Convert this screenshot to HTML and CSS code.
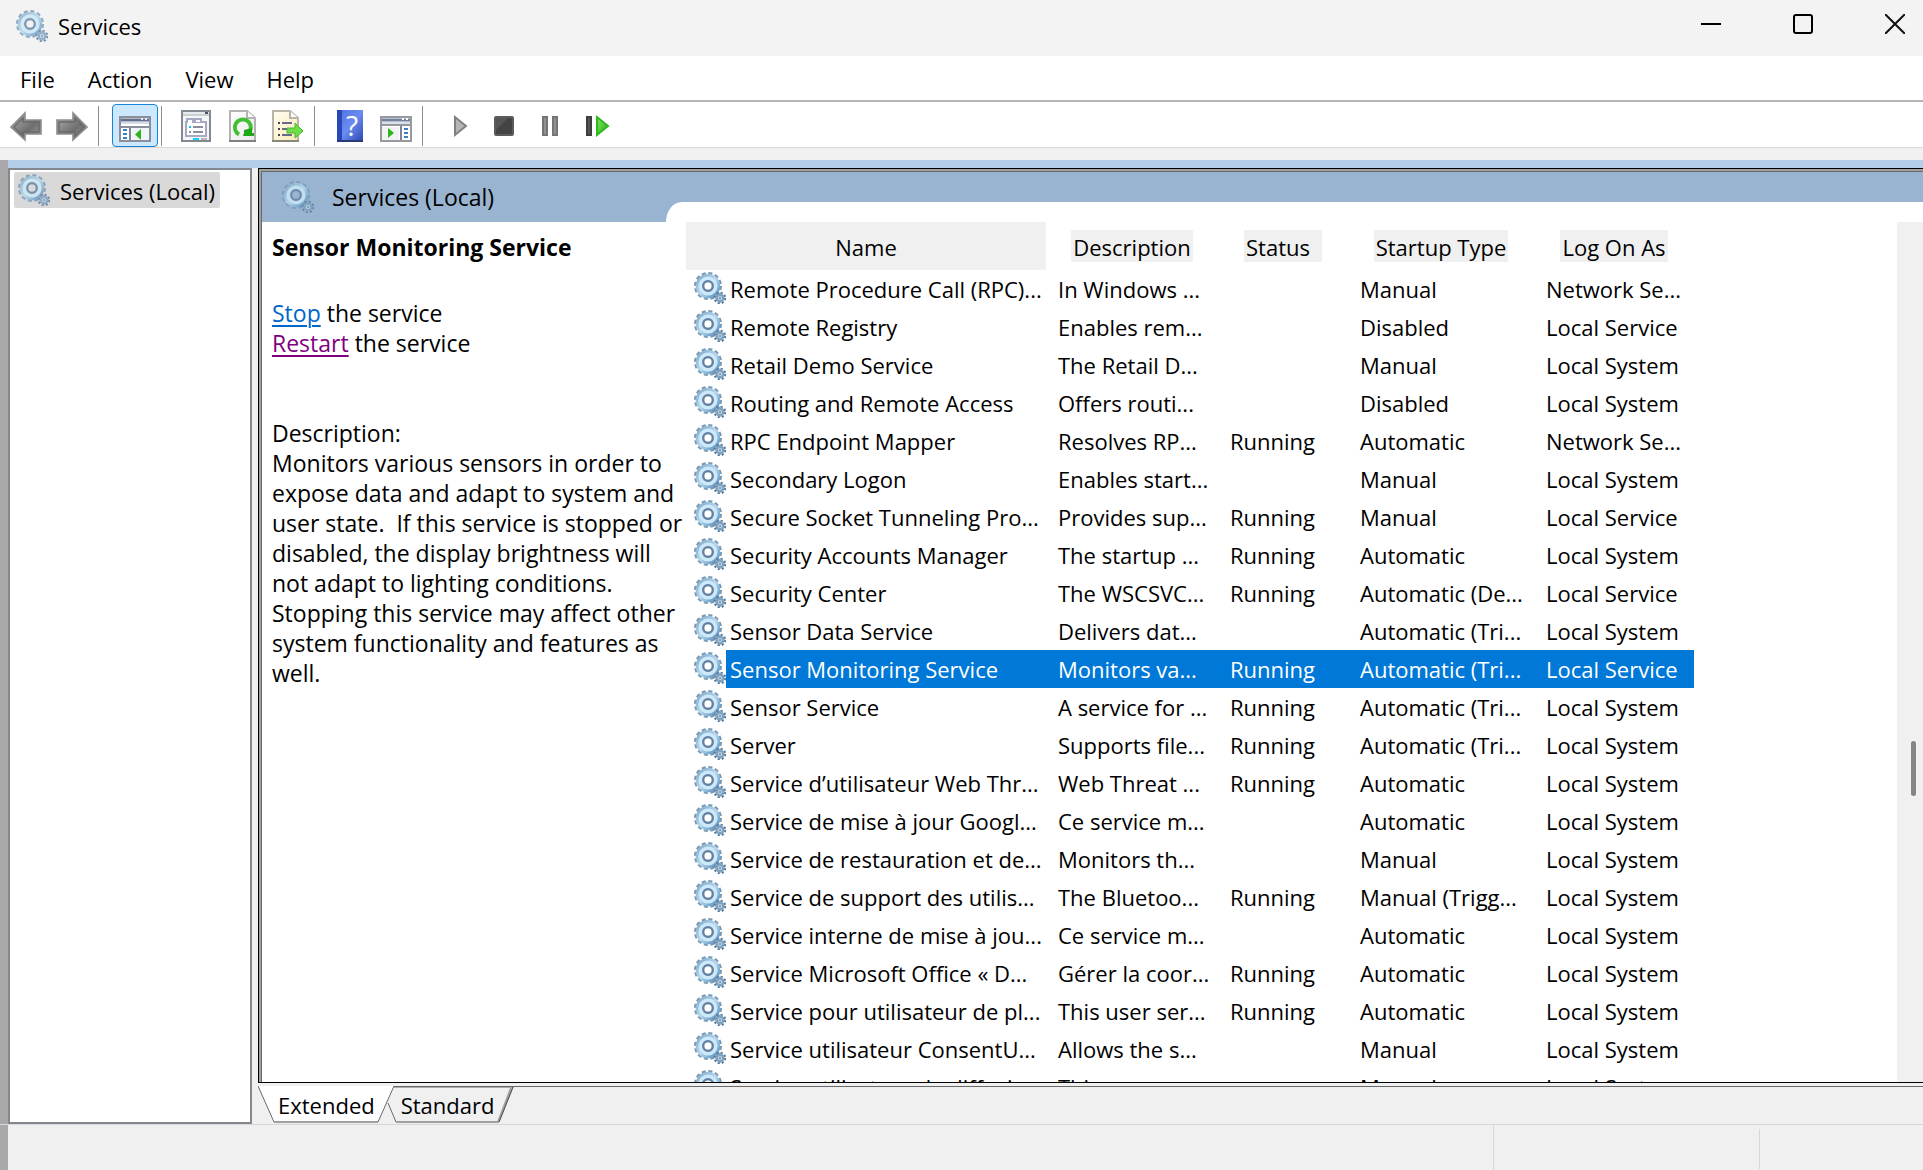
FILE: index.html
```html
<!DOCTYPE html>
<html lang="en">
<head>
  <meta charset="UTF-8">
  <title>Services</title>
  <link rel="stylesheet" href="styles.css">
</head>
<body>

  <!-- shared icon -->
  <svg class="defs" width="0" height="0">
    <defs>
      <linearGradient id="gearFill" x1="0" y1="0" x2="1" y2="1">
        <stop offset="0" stop-color="#8fb4d0"/>
        <stop offset="0.5" stop-color="#b4d8ee"/>
        <stop offset="1" stop-color="#6d9dc6"/>
      </linearGradient>
      <linearGradient id="arrowFill" x1="0" y1="0" x2="1" y2="1">
        <stop offset="0" stop-color="#b4b4b4"/>
        <stop offset="0.6" stop-color="#6e6e6e"/>
        <stop offset="1" stop-color="#a8a8a8"/>
      </linearGradient>
      <linearGradient id="greenFill" x1="0" y1="0" x2="1" y2="1">
        <stop offset="0" stop-color="#8be36a"/>
        <stop offset="1" stop-color="#1fae12"/>
      </linearGradient>
      <linearGradient id="pageFill" x1="0" y1="0" x2="1" y2="1">
        <stop offset="0" stop-color="#ffffff"/>
        <stop offset="1" stop-color="#e9e9e9"/>
      </linearGradient>
      <linearGradient id="creamFill" x1="0" y1="0" x2="1" y2="1">
        <stop offset="0" stop-color="#fffdf4"/>
        <stop offset="1" stop-color="#fbe9b4"/>
      </linearGradient>
      <linearGradient id="helpFill" x1="0" y1="0" x2="1" y2="1">
        <stop offset="0" stop-color="#4a6fe0"/>
        <stop offset="0.5" stop-color="#6b8cf0"/>
        <stop offset="1" stop-color="#2b46ae"/>
      </linearGradient>
      <symbol id="gear" viewBox="0 0 32 32">
        <circle cx="14" cy="14" r="12.4" fill="none" stroke="#7797b3" stroke-width="3.2" stroke-dasharray="3.9 2.592"/>
        <circle cx="14" cy="14" r="8" fill="none" stroke="url(#gearFill)" stroke-width="8.600"/>
        <circle cx="14" cy="14" r="7.8" fill="none" stroke="#cbe9f8" stroke-width="3.6"/>
        <circle cx="14" cy="14" r="4.8" fill="none" stroke="#667f9f" stroke-width="2.2"/>
        <circle cx="26" cy="26" r="5" fill="none" stroke="#56799b" stroke-width="2.6" stroke-dasharray="1.96 1.96"/>
        <circle cx="26" cy="26" r="3.4" fill="#c4dae9" stroke="#7fa2bf" stroke-width="2.6"/>
        <circle cx="26" cy="26" r="1" fill="#6b88a5"/>
      </symbol>
    </defs>
  </svg>

  <header class="titlebar">
    <svg class="gear faded"><use href="#gear"/></svg>
    <span class="window-title">Services</span>
    <div class="window-controls">
      <button aria-label="Minimize"><svg width="20" height="20"><path d="M0 10h20" stroke="#000" stroke-width="2"/></svg></button>
      <button aria-label="Maximize"><svg width="20" height="20"><rect x="1" y="1" width="18" height="18" rx="2" fill="none" stroke="#000" stroke-width="2"/></svg></button>
      <button aria-label="Close"><svg width="20" height="20"><path d="M0 0L20 20M20 0L0 20" stroke="#111" stroke-width="2"/></svg></button>
    </div>
  </header>

  <nav class="menubar">
    <button>File</button>
    <button>Action</button>
    <button>View</button>
    <button>Help</button>
  </nav>

  <div class="toolbar">
    <button aria-label="Back">
      <svg width="32" height="32"><path d="M1 17L15 3V10H31V24H15V30Z" fill="url(#arrowFill)" stroke="#8d8d8d" stroke-width="1.6"/><path d="M4 17L13 8V12H29V22H13V26Z" fill="none" stroke="#6a6a6a" stroke-width="1.4"/></svg>
    </button>
    <button aria-label="Forward">
      <svg width="32" height="32"><path d="M31 17L17 3V10H1V24H17V30Z" fill="url(#arrowFill)" stroke="#8d8d8d" stroke-width="1.6"/><path d="M28 17L19 8V12H3V22H19V26Z" fill="none" stroke="#6a6a6a" stroke-width="1.4"/></svg>
    </button>
    <span class="separator"></span>
    <button class="pressed" aria-label="Show/Hide Console Tree">
      <svg width="32" height="32"><rect x="1" y="7" width="30" height="24" fill="#fff" stroke="#8b8f9b" stroke-width="2"/><path d="M2 10h28" stroke="#66718c" stroke-width="3"/><path d="M22 9h2M26 9h2" stroke="#dfe8f5" stroke-width="2"/><path d="M2 13h28" stroke="#d5dde8" stroke-width="2"/><path d="M2 17h28" stroke="#8b8f9b" stroke-width="2"/><path d="M11 18v12" stroke="#7c849a" stroke-width="2"/><path d="M4 20h4M4 24h4M4 28h4" stroke="#3b7fc4" stroke-width="2"/><rect x="13" y="18" width="17" height="12" fill="#f1f4f8"/><path d="M22 19V30L16 24.500Z" fill="#2cb51c"/></svg>
    </button>
    <span class="separator"></span>
    <button aria-label="Properties">
      <svg width="32" height="32"><rect x="2" y="1" width="28" height="30" fill="#f4f6f8" stroke="#838991" stroke-width="2"/><path d="M3 3h26" stroke="#e6eaee" stroke-width="2"/><path d="M3 5h26" stroke="#a2aab5" stroke-width="1"/><path d="M25 3h3" stroke="#4b5566" stroke-width="2"/><path d="M6 12H26V26H6Z" fill="#fff" stroke="#a6a9c4" stroke-width="2"/><path d="M7 13V9H13V13M15 12V9H21V12" fill="#fff" stroke="#a6a9c4" stroke-width="2"/><path d="M9 17h2" stroke="#12c4f2" stroke-width="2"/><path d="M13 17h10M13 22h10" stroke="#8b8f9b" stroke-width="2"/><path d="M9 22h2" stroke="#8b8f9b" stroke-width="2"/><path d="M13 29h6" stroke="#12d0ff" stroke-width="2"/><path d="M21 29h6" stroke="#b4b4b4" stroke-width="2"/></svg>
    </button>
    <button aria-label="Refresh">
      <svg width="32" height="32"><path d="M4 1H21L29 8V31H4Z" fill="url(#pageFill)" stroke="#b3b3b3" stroke-width="2"/><path d="M3 31h27" stroke="#808080" stroke-width="2"/><path d="M21 1V8H29" fill="#fff" stroke="#b3b3b3" stroke-width="2"/><path d="M13 24.500A8 8 0 1 1 24 21" fill="none" stroke="#42c035" stroke-width="4"/><path d="M17 26H28V23H26V18L18 20V23Z" fill="#1ea814"/></svg>
    </button>
    <button aria-label="Export List">
      <svg width="32" height="32"><path d="M1 1H18L26 8V31H1Z" fill="url(#creamFill)" stroke="#b9b5a8" stroke-width="2"/><path d="M0 31h27" stroke="#8a877e" stroke-width="2"/><path d="M18 1V8H26" fill="#fff" stroke="#b9b5a8" stroke-width="2"/><path d="M6 13h2M6 19h2M6 25h2" stroke="#444" stroke-width="2"/><path d="M10 13h10M10 19h6M10 25h10" stroke="#68688a" stroke-width="2"/><path d="M15 18H23V13L31 21L23 28V23H15Z" fill="#6fdd48" stroke="#46b92e" stroke-width="1"/></svg>
    </button>
    <span class="separator"></span>
    <button aria-label="Help">
      <svg width="32" height="32"><rect x="3" width="26" height="32" fill="url(#helpFill)"/><rect x="3" width="5" height="32" fill="#2847b8"/><path d="M3 31h26" stroke="#2a3a78" stroke-width="2"/><text x="18" y="26" class="help-mark">?</text></svg>
    </button>
    <button aria-label="Show/Hide Action Pane">
      <svg width="32" height="32"><rect x="1" y="7" width="30" height="24" fill="#fff" stroke="#96999f" stroke-width="2"/><path d="M2 10h28" stroke="#73809b" stroke-width="3"/><path d="M22 9h2M26 9h2" stroke="#fff" stroke-width="2"/><path d="M2 13h28" stroke="#dbe0e8" stroke-width="2"/><path d="M2 15h28" stroke="#96999f" stroke-width="2"/><rect x="2" y="17" width="17" height="13" fill="#f3f3f3"/><path d="M21 16v14" stroke="#7c849a" stroke-width="2"/><path d="M24 19h4M24 23h4M24 27h4" stroke="#3b7fc4" stroke-width="2"/><path d="M8 18V28L14 23Z" fill="#2cb51c"/></svg>
    </button>
    <span class="separator"></span>
    <button aria-label="Start Service">
      <svg width="32" height="32"><path d="M13 7V25L24 16Z" fill="#b5b5b5" stroke="#808080" stroke-width="2"/></svg>
    </button>
    <button aria-label="Stop Service">
      <svg width="32" height="32"><rect x="7" y="7" width="18" height="18" rx="1" fill="#444" stroke="#5c5c5c" stroke-width="2"/><path d="M8 20L20 8H8Z" fill="#565656"/></svg>
    </button>
    <button aria-label="Pause Service">
      <svg width="32" height="32"><path d="M9 7h4v18H9ZM19 7h4v18H19Z" fill="#929292" stroke="#747474" stroke-width="2"/></svg>
    </button>
    <button aria-label="Restart Service">
      <svg width="32" height="32"><path d="M7 7h4v18H7Z" fill="#555" stroke="#3e3e3e" stroke-width="2"/><path d="M17 7V25L28 16Z" fill="url(#greenFill)" stroke="#2db81d" stroke-width="2"/></svg>
    </button>
  </div>

  <main class="workspace">
    <aside class="tree">
      <div class="tree-item">
        <svg class="gear faded"><use href="#gear"/></svg>
        <span>Services (Local)</span>
      </div>
    </aside>

    <section class="content">
      <div class="pane">
        <div class="pane-header">
          <div class="pane-title">
            <svg class="gear faded"><use href="#gear"/></svg>
            <span>Services (Local)</span>
          </div>
          <div class="pane-notch"></div>
        </div>

        <div class="pane-body">
          <div class="details">
            <h1>Sensor Monitoring Service</h1>
            <p class="actions">
              <a href="#">Stop</a> the service<br>
              <a href="#" class="visited">Restart</a> the service
            </p>
            <p>Description:<br>
              Monitors various sensors in order to expose data and adapt to system and user state.&nbsp; If this service is stopped or disabled, the display brightness will not adapt to lighting conditions. Stopping this service may affect other system functionality and features as well.</p>
          </div>

          <div class="list">
            <table>
              <colgroup>
                <col class="col-name"><col class="col-desc"><col class="col-status"><col class="col-startup"><col class="col-logon">
              </colgroup>
              <thead>
                <tr>
                  <th class="sorted"><span>Name</span></th>
                  <th><span>Description</span></th>
                  <th><span class="label-status">Status</span></th>
                  <th><span>Startup Type</span></th>
                  <th><span>Log On As</span></th>
                </tr>
              </thead>
              <tbody id="services"></tbody>
            </table>
          </div>

          <div class="scrollbar"><div class="thumb"></div></div>
        </div>
      </div>

      <div class="tabs">
        <svg class="tab-shapes" width="260" height="38">
          <path d="M130 17L138 36H241L255 1H136" fill="#f0f0f0" stroke="#696969"/>
          <path d="M138 36H240L253 2" fill="none" stroke="#a0a0a0" stroke-width="2"/>
          <path d="M241 36L255 1" stroke="#555" fill="none"/>
          <path d="M0 0L16 36H120L136 0Z" fill="#fff"/>
          <path d="M0 0L16 36" stroke="#696969" fill="none"/>
          <path d="M16 36H120" stroke="#a0a0a0" stroke-width="2" fill="none"/>
          <path d="M120 36L136 0" stroke="#696969" fill="none"/>
        </svg>
        <button>Extended</button>
        <button>Standard</button>
      </div>
    </section>
  </main>

  <footer class="statusbar">
    <div></div>
    <div></div>
    <div></div>
  </footer>

  <script>
    const services = [
      ["Remote Procedure Call (RPC)...", "In Windows ...", "", "Manual", "Network Se..."],
      ["Remote Registry", "Enables rem...", "", "Disabled", "Local Service"],
      ["Retail Demo Service", "The Retail D...", "", "Manual", "Local System"],
      ["Routing and Remote Access", "Offers routi...", "", "Disabled", "Local System"],
      ["RPC Endpoint Mapper", "Resolves RP...", "Running", "Automatic", "Network Se..."],
      ["Secondary Logon", "Enables start...", "", "Manual", "Local System"],
      ["Secure Socket Tunneling Pro...", "Provides sup...", "Running", "Manual", "Local Service"],
      ["Security Accounts Manager", "The startup ...", "Running", "Automatic", "Local System"],
      ["Security Center", "The WSCSVC...", "Running", "Automatic (De...", "Local Service"],
      ["Sensor Data Service", "Delivers dat...", "", "Automatic (Tri...", "Local System"],
      ["Sensor Monitoring Service", "Monitors va...", "Running", "Automatic (Tri...", "Local Service"],
      ["Sensor Service", "A service for ...", "Running", "Automatic (Tri...", "Local System"],
      ["Server", "Supports file...", "Running", "Automatic (Tri...", "Local System"],
      ["Service d’utilisateur Web Thr...", "Web Threat ...", "Running", "Automatic", "Local System"],
      ["Service de mise à jour Googl...", "Ce service m...", "", "Automatic", "Local System"],
      ["Service de restauration et de...", "Monitors th...", "", "Manual", "Local System"],
      ["Service de support des utilis...", "The Bluetoo...", "Running", "Manual (Trigg...", "Local System"],
      ["Service interne de mise à jou...", "Ce service m...", "", "Automatic", "Local System"],
      ["Service Microsoft Office « D...", "Gérer la coor...", "Running", "Automatic", "Local System"],
      ["Service pour utilisateur de pl...", "This user ser...", "Running", "Automatic", "Local System"],
      ["Service utilisateur ConsentU...", "Allows the s...", "", "Manual", "Local System"],
      ["Service utilisateur de diffusi...", "This user ser...", "", "Manual", "Local System"]
    ];
    const selected = "Sensor Monitoring Service";

    document.getElementById("services").innerHTML = services
      .map(([name, ...rest]) => `
        <tr class="${name === selected ? "selected" : ""}">
          <td class="name"><div><svg class="gear"><use href="#gear"/></svg><span>${name}</span></div></td>
          ${rest.map(cell => `<td>${cell}</td>`).join("")}
        </tr>`)
      .join("");
  </script>
</body>
</html>
```
FILE: styles.css
```css
* {
  box-sizing: border-box;
}

body {
  margin: 0;
  height: 100vh;
  display: flex;
  flex-direction: column;
  overflow: hidden;
  background: #f0f0f0;
  color: #000;
  font-family: "Open Sans", "Noto Sans", sans-serif;
  font-size: 22px;
  line-height: 30px;
}

button {
  padding: 0;
  border: none;
  background: none;
  color: inherit;
  font: inherit;
}

svg {
  display: block;
  flex: none;
}

.defs {
  position: absolute;
}

.gear {
  width: 32px;
  height: 32px;
}

.faded {
  opacity: 0.8;
}

/* title bar */
.titlebar {
  flex: none;
  height: 56px;
  display: flex;
  align-items: center;
  padding: 0 18px 4px 16px;
  background: #f3f3f3;
}

.window-title {
  margin-left: 10px;
}

.window-controls {
  display: flex;
  gap: 72px;
  margin-left: auto;
  padding-bottom: 4px;
}

/* menu */
.menubar {
  flex: none;
  height: 46px;
  display: flex;
  gap: 1px;
  padding-left: 4px;
  background: #fff;
  border-bottom: 2px solid #b4b4b6;
}

.menubar button {
  padding: 2px 16px 0;
}

/* toolbar */
.toolbar {
  flex: none;
  height: 46px;
  display: flex;
  padding: 2px 0 0 3px;
  background: #fff;
  border-bottom: 1px solid #d9d9d9;
}

.toolbar button {
  width: 46px;
  display: flex;
  align-items: center;
  justify-content: center;
}

.toolbar .pressed {
  background: #cce8ff;
  border: 1px solid #1883d7;
  border-radius: 4px;
}

.separator {
  width: 1px;
  margin: 2px 12px 1px 3px;
  background: #8d8d8d;
}

.pressed + .separator {
  margin-right: 11px;
}

.separator:has(+ .pressed) {
  margin-right: 13px;
}

.help-mark {
  fill: #fff;
  font-size: 28px;
  text-anchor: middle;
}

/* main area */
.workspace {
  flex: 1;
  min-height: 0;
  display: flex;
  gap: 6px;
  margin-top: 12px;
  padding-top: 8px;
  border-left: 8px solid #a9a9a9;
  background: linear-gradient(#b4cde8 8px, #f0f0f0 8px);
}

.tree {
  width: 244px;
  padding: 2px 4px;
  background: #fff;
  border: 2px solid #828790;
}

.tree-item {
  width: 206px;
  height: 36px;
  display: flex;
  align-items: center;
  gap: 10px;
  padding-left: 4px;
  background: #d9d9d9;
  border-radius: 2px;
  white-space: nowrap;
}

.tree-item span {
  padding-top: 2px;
}

.content {
  flex: 1;
  min-width: 0;
  display: flex;
  flex-direction: column;
}

.pane {
  flex: 1;
  min-height: 0;
  display: flex;
  flex-direction: column;
  background: #fff;
  border: solid #000;
  border-width: 1px 0 1px 1px;
  box-shadow: inset 2px 2px #a0a0a0, inset 3px 3px #696969;
  padding: 3px 0 0 3px;
}

.pane-header {
  flex: none;
  height: 50px;
  display: flex;
  align-items: flex-end;
  background: #99b4d1;
}

.pane-title {
  width: 404px;
  height: 50px;
  display: flex;
  align-items: center;
  gap: 18px;
  padding-left: 20px;
  font-size: 23px;
}

.pane-notch {
  flex: 1;
  height: 20px;
  background: #fff;
  border-top-left-radius: 16px 20px;
}

.pane-body {
  flex: 1;
  min-height: 0;
  display: flex;
}

.details {
  width: 424px;
  padding: 10px 0 0 10px;
  font-size: 23px;
}

.details h1 {
  margin: 0 0 36px;
  font-size: 23px;
  line-height: 30px;
}

.details p {
  margin: 0;
}

.details .actions {
  margin-bottom: 60px;
}

.details a {
  color: #0066cc;
  text-decoration-thickness: 2px;
  text-underline-offset: 3px;
}

.details .visited {
  color: #800080;
}

.list {
  flex: 1;
  min-width: 0;
  overflow: hidden;
}

table {
  width: 1008px;
  table-layout: fixed;
  border-collapse: collapse;
}

.col-name { width: 360px; }
.col-desc { width: 172px; }
.col-status { width: 130px; }
.col-startup { width: 186px; }
.col-logon { width: 160px; }

th {
  height: 48px;
  padding: 0;
  font-weight: normal;
  white-space: nowrap;
}

th span {
  display: inline-block;
  padding: 2px 2px 0;
  line-height: 30px;
  background: #f0f0f0;
}

th .label-status {
  width: 78px;
  text-align: left;
}

.sorted {
  background: #f0f0f0;
}

td {
  height: 38px;
  padding: 0 0 0 12px;
  white-space: nowrap;
}

td.name {
  padding: 0 0 0 8px;
}

.name div {
  display: flex;
  align-items: center;
}

.name span {
  flex: 1;
  padding-left: 4px;
  line-height: 38px;
}

.name .gear {
  margin-bottom: 2px;
}

.selected td {
  background: #0078d7;
  color: #fff;
}

.selected .name {
  background: linear-gradient(to right, #fff 40px, #0078d7 40px);
}

.scrollbar {
  width: 26px;
  padding-left: 14px;
  background: #f0f0f0;
}

.thumb {
  width: 5px;
  height: 55px;
  margin-top: 519px;
  background: #858585;
  border-radius: 3px;
}

/* bottom tabs */
.tabs {
  flex: none;
  height: 38px;
  display: flex;
  gap: 26px;
  position: relative;
  margin-top: 3px;
  padding: 1px 0 3px 20px;
  border-top: 1px solid #696969;
}

.tabs button {
  position: relative;
}

.tab-shapes {
  position: absolute;
  left: 0;
  top: -1px;
}

/* status bar */
.statusbar {
  flex: none;
  height: 46px;
  display: flex;
  padding: 4px 0 1px;
  border-top: 1px solid #d7d7d7;
}

.statusbar div {
  width: 266px;
  border-right: 1px solid #d7d7d7;
}

.statusbar div:first-child {
  flex: 1;
  margin: -4px 0 -1px;
  border-left: 8px solid #a9a9a9;
}

.statusbar div:last-child {
  width: 163px;
  border: none;
}
```
